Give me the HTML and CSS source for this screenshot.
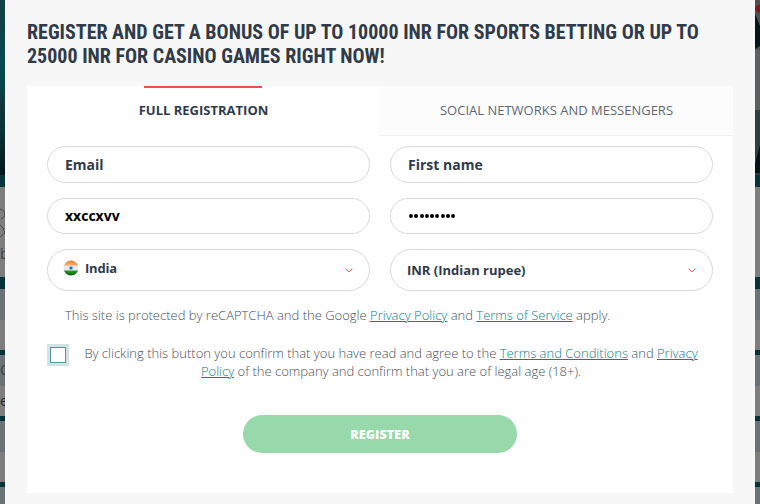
FILE: index.html
```
<!DOCTYPE html>
<html lang="en">
<head>
  <meta charset="UTF-8" />
  <meta name="viewport" content="width=device-width, initial-scale=1.0" />
  <title>Registration</title>
  <link rel="stylesheet" href="styles.css">
</head>
<body>
  <!-- dimmed page behind the popup -->
  <div class="page">
    <div class="banner">
      <div class="banner-left"></div>
      <svg class="banner-right" width="5" height="175" viewBox="0 0 5 175">
        <rect width="5" height="175" fill="#4d5151" />
        <path d="M5 4v9l-5-3V7z" fill="#8f1216" />
        <path d="M0 14l5 12v20l-5 3z" fill="#031619" />
        <path d="M0 50h5v60H0z" fill="#5c6060" />
        <path d="M0 110h5v65H0z" fill="#2b3f40" />
        <path d="M5 145v28H0v-9z" fill="#021416" />
      </svg>
    </div>
    <div class="line line-big"></div>
    <div class="intro">
      <svg class="ball" width="5" height="30" viewBox="0 0 5 30" fill="none" stroke="#4b4b4b">
        <path d="M0 1l4 2 1 5-4 3M0 17l3 3 2 5-5 4" />
      </svg>
      <span class="cut cut-b">b</span>
    </div>
    <div class="line line-big"></div>
    <div class="row row-head"></div>
    <div class="row"></div>
    <div class="line"></div>
    <div class="row row-head"><span class="cut">C</span></div>
    <div class="row"><span class="cut cut-dark">e</span></div>
    <div class="line"></div>
    <div class="row row-head"></div>
    <div class="row"></div>
    <div class="line"></div>
    <div class="row row-head"></div>
  </div>

  <div class="popup">
    <h1>Register and get a bonus of up to 10000 INR for sports betting or up to<br>25000 INR for casino games right now!</h1>

    <div class="card">
      <div class="tabs">
        <div class="tab active">Full registration</div>
        <div class="tab">Social networks and messengers</div>
      </div>

      <form class="form">
        <div class="fields">
          <div class="field">Email</div>
          <div class="field">First name</div>
          <div class="field typed">xxccxvv</div>
          <div class="field typed">
            <span class="dots"><i></i><i></i><i></i><i></i><i></i><i></i><i></i><i></i><i></i></span>
          </div>
          <div class="field select country">
            <svg class="flag" width="16" height="16" viewBox="0 0 16 16">
              <defs>
                <clipPath id="round"><circle cx="8" cy="8" r="7.5" /></clipPath>
                <linearGradient id="saffron" x2="0" y2="1">
                  <stop offset="0" stop-color="#f37a2d" />
                  <stop offset="1" stop-color="#fbb06e" />
                </linearGradient>
                <linearGradient id="green" x2="0" y2="1">
                  <stop offset="0" stop-color="#2d9a22" />
                  <stop offset="1" stop-color="#066005" />
                </linearGradient>
              </defs>
              <g clip-path="url(#round)">
                <rect width="16" height="16" fill="#ece9ee" />
                <rect width="16" height="5.5" fill="url(#saffron)" />
                <rect y="10.5" width="16" height="5.5" fill="url(#green)" />
              </g>
              <circle cx="8" cy="8" r="1.8" fill="#2378b0" stroke="#9cc4dd" stroke-width=".8" />
            </svg>
            <span class="name">India</span>
            <svg class="arrow" width="8" height="5" viewBox="0 0 8 5"><path d="M.7.7L4 3.8 7.3.7" /></svg>
          </div>
          <div class="field select">
            <span>INR (Indian rupee)</span>
            <svg class="arrow" width="8" height="5" viewBox="0 0 8 5"><path d="M.7.7L4 3.8 7.3.7" /></svg>
          </div>
        </div>

        <p class="captcha">This site is protected by reCAPTCHA and the Google <a href="#">Privacy Policy</a> and <a href="#">Terms of Service</a> apply.</p>

        <div class="agree">
          <span class="checkbox"></span>
          <p>By clicking this button you confirm that you have read and agree to the <a href="#">Terms and Conditions</a> and <a href="#">Privacy<br>Policy</a> of the company and confirm that you are of legal age (18+).</p>
        </div>

        <button class="btn" type="button">REGISTER</button>
      </form>
    </div>
  </div>
</body>
</html>
```

FILE: styles.css
```
:root {
  --popup-bg: #f7f7f7;
  --text-dark: #303b49;
  --text-light: #5f6776;
  --text-thin: #4a5160;
  --border: #d9d9d9;
  --teal: #06343a;
  --link: #0b7f8a;
  --red: #f04e46;
}

* {
  box-sizing: border-box;
}

body {
  margin: 0;
  height: 504px;
  overflow: hidden;
  position: relative;
  font-family: "Open Sans", "Noto Sans", sans-serif;
  color: var(--text-dark);
}

.page {
  height: 504px;
  overflow: hidden;
}

.banner {
  display: flex;
  justify-content: space-between;
  height: 175px;
}

.banner-left {
  width: 5px;
  background: linear-gradient(#153f42, #07494f 35%, #06464c 48%, #123638 60%, #0b3437 75%, #021719);
}

.line {
  height: 5px;
  background: var(--teal);
}

.line-big {
  height: 12px;
}

.intro {
  height: 90px;
  padding-top: 21px;
  background: #7e7e7e;
}

.ball {
  display: block;
}

.row {
  height: 30px;
  background: #7e7e7e;
}

.row-head {
  height: 31px;
  background: #6b7376;
}

.cut {
  display: block;
  font-size: 14px;
  line-height: 30px;
  color: #3c4142;
}

.cut-b {
  line-height: 32px;
}

.cut-dark {
  color: #222831;
}

.popup {
  position: absolute;
  top: 0;
  left: 5px;
  width: 750px;
  height: 504px;
  padding: 20px 22px 0;
  border-radius: 2px 2px 0 0;
  background: var(--popup-bg);
}

h1 {
  margin: 0 0 18px;
  font-family: "Roboto Condensed", Roboto, sans-serif;
  font-stretch: condensed;
  font-size: 20px;
  line-height: 24px;
  font-weight: 700;
  text-transform: uppercase;
  white-space: nowrap;
}

.card {
  height: 407px;
  background: #fff;
}

.tabs {
  display: flex;
  height: 50px;
}

.tab {
  flex: 1;
  padding-left: 1px;
  font-size: 13px;
  line-height: 49px;
  text-align: center;
  text-transform: uppercase;
  color: var(--text-light);
  background: #fcfcfc;
  border-bottom: 1px solid #f0f0f0;
}

.tab.active {
  flex: 0 0 352px;
  font-weight: 700;
  color: var(--text-dark);
  background: linear-gradient(var(--red), var(--red)) center top / 118px 2px no-repeat #fff;
  border-bottom: none;
}

.form {
  padding: 10px 20px 0;
}

.fields {
  display: grid;
  grid-template-columns: 1fr 1fr;
  grid-template-rows: 37px 36px 42px;
  gap: 15px 20px;
}

.field {
  display: flex;
  align-items: center;
  padding: 0 17px;
  border: 1px solid var(--border);
  border-radius: 21px;
  font-size: 14px;
  font-weight: 700;
}

.typed {
  padding-bottom: 1px;
  color: #000;
}

.dots {
  display: flex;
  gap: 1.25px;
  margin-left: 1px;
}

.dots i {
  width: 4px;
  height: 4px;
  border-radius: 50%;
  background: #000;
}

.select {
  padding: 0 16px;
  font-size: 13px;
}

.country {
  padding-left: 15px;
}

.flag {
  margin: -5px 6px 0 0;
}

.name {
  margin-top: -4px;
  letter-spacing: -0.2px;
}

.arrow {
  margin-left: auto;
  fill: none;
  stroke: var(--red);
}

.captcha {
  margin: 15px 0 0 18px;
  font-size: 13px;
  font-weight: 300;
  line-height: 18px;
  color: var(--text-thin);
  white-space: nowrap;
}

a {
  color: var(--link);
  text-decoration-thickness: 1px;
  text-underline-offset: 1px;
}

.agree {
  display: flex;
  margin-top: 20px;
}

.checkbox {
  flex: none;
  width: 22px;
  height: 22px;
  border: 3px solid #d3e2e3;
  background: #fff;
  box-shadow: inset 0 0 0 1px #4b989e;
}

.agree p {
  flex: 1;
  margin: 0;
  font-size: 13px;
  font-weight: 300;
  line-height: 18px;
  text-align: center;
  color: var(--text-thin);
  white-space: nowrap;
}

.btn {
  display: block;
  width: 274px;
  height: 38px;
  margin: 35px auto 0;
  border: none;
  border-radius: 19px;
  background: #97d9ab;
  color: #fff;
  font-family: inherit;
  font-size: 12.5px;
  font-weight: 800;
  letter-spacing: 0.1px;
}
```
